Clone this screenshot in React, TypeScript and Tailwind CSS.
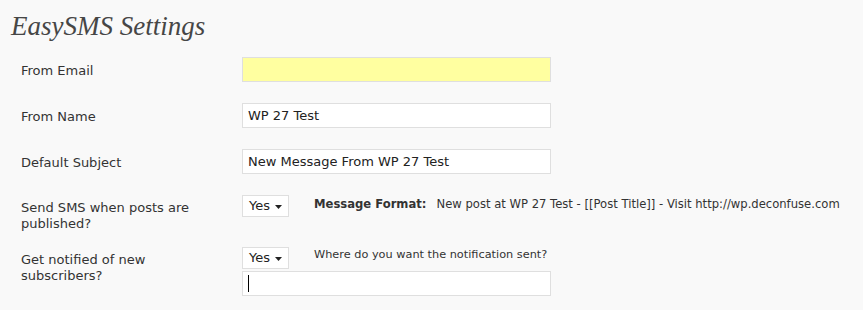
import React from "react";

function Select() {
  return (
    <div className="flex h-[22px] w-[47px] items-center border border-[#dfdfdf] bg-white pl-[6px] text-[13px] text-[#222]">
      <span>Yes</span>
      <svg width="8" height="4" viewBox="0 0 8 4" className="ml-[5px] mt-[2px]">
        <path d="M0 0h7L3.5 4z" fill="#222" />
      </svg>
    </div>
  );
}

function Input({ value, yellow, caret }: { value?: string; yellow?: boolean; caret?: boolean }) {
  return (
    <div
      className={`flex h-[25px] w-[309px] items-center border border-[#dfdfdf] pl-[5px] text-[13px] text-[#222] ${
        yellow ? "bg-[#ffffa0]" : "bg-white"
      }`}
    >
      {caret ? <span className="h-[17px] w-px bg-black" /> : value}
    </div>
  );
}

export default function App() {
  return (
    <div
      className="min-h-[310px] w-[863px] bg-[#f9f9f9] text-[#333]"
      style={{ fontFamily: '"DejaVu Sans", Verdana, sans-serif' }}
    >
      <h2
        className="pl-[11px] pt-[10px] text-[27px] italic leading-[32px] text-[#464646]"
        style={{ fontFamily: '"Liberation Serif", Georgia, serif' }}
      >
        EasySMS Settings
      </h2>
      <div className="mt-[15px] flex flex-col text-[13px]">
        <div className="flex h-[46px] items-start">
          <div className="w-[242px] pl-[21px] pt-[4px]">From Email</div>
          <Input yellow />
        </div>
        <div className="flex h-[46px] items-start">
          <div className="w-[242px] pl-[21px] pt-[4px]">From Name</div>
          <Input value="WP 27 Test" />
        </div>
        <div className="flex h-[46px] items-start">
          <div className="w-[242px] pl-[21px] pt-[4px]">Default Subject</div>
          <Input value="New Message From WP 27 Test" />
        </div>
        <div className="flex h-[52px] items-start">
          <div className="w-[242px] pl-[21px] pr-[30px] pt-[5px] leading-[16px]">Send SMS when posts are published?</div>
          <Select />
          <div
            className="ml-[25px] mt-[1px] flex text-[11.6px] text-[#333]"
            style={{ fontFamily: '"DejaVu Sans", Tahoma, sans-serif' }}
          >
            <span className="font-bold">Message Format:</span>
            <span className="ml-[10px]">New post at WP 27 Test - [[Post Title]] - Visit http://wp.deconfuse.com</span>
          </div>
        </div>
        <div className="flex items-start">
          <div className="w-[242px] pl-[21px] pr-[60px] pt-[5px] leading-[16px]">Get notified of new subscribers?</div>
          <div className="flex flex-col gap-[2px]">
            <div className="flex items-start">
              <Select />
              <div
                className="ml-[25px] text-[11.3px]"
                style={{ fontFamily: '"DejaVu Sans", Tahoma, sans-serif' }}
              >
                Where do you want the notification sent?
              </div>
            </div>
            <Input caret />
          </div>
        </div>
      </div>
    </div>
  );
}
